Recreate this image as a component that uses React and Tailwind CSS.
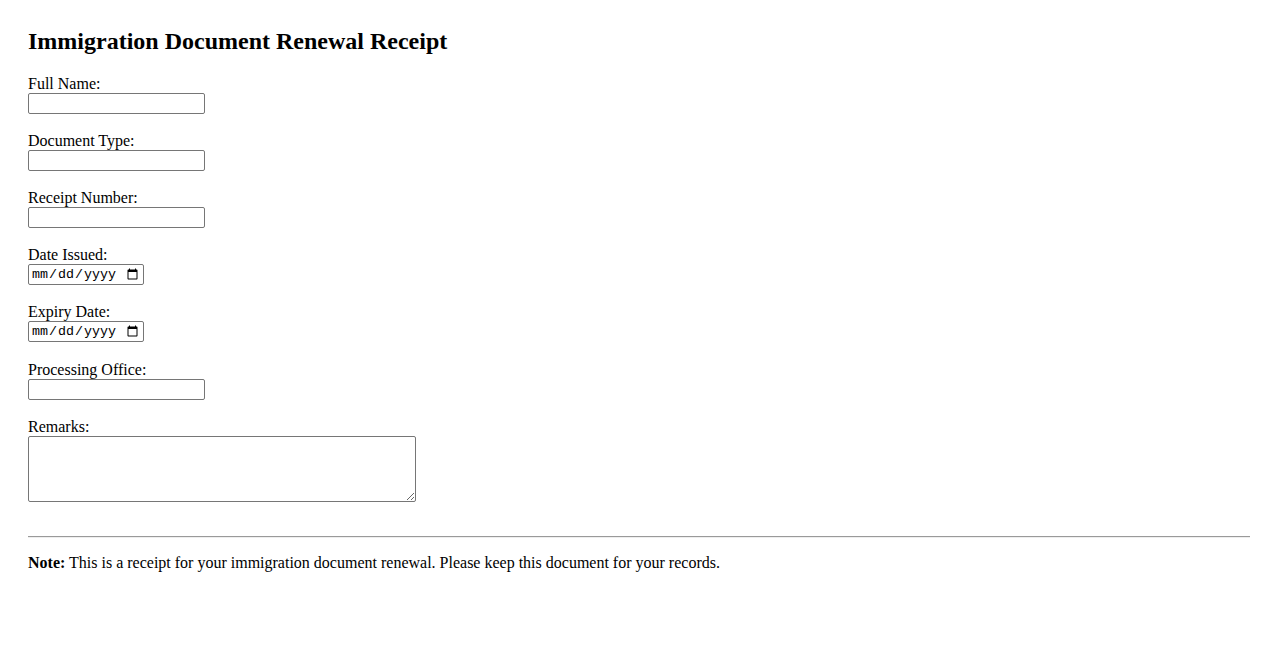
export default function App() {
    const fields = [
        { label: "Full Name:", type: "text" },
        { label: "Document Type:", type: "text" },
        { label: "Receipt Number:", type: "text" },
        { label: "Date Issued:", type: "date" },
        { label: "Expiry Date:", type: "date" },
        { label: "Processing Office:", type: "text" },
    ];

    return (
        <div className="min-h-screen bg-white px-[28px] pt-[28px] text-[16px] text-black font-['Liberation_Serif',serif]">
            <h2 className="text-[24px] font-bold leading-[27.6px] mb-[19px]">Immigration Document Renewal Receipt</h2>

            <form>
                {fields.map((f) => (
                    <div key={f.label} className="mb-[18.2px]">
                        <label className="block leading-[18px]">{f.label}</label>
                        {f.type === "date" ? (
                            <input
                                type="date"
                                className="block w-[116px] h-[21px] border border-[#767676] rounded-[2px] px-[2px] py-0 text-[13.33px] font-['Liberation_Mono',monospace] text-black"
                            />
                        ) : (
                            <input
                                type="text"
                                className="block w-[177px] h-[21px] border border-[#767676] rounded-[2px] px-[2px] py-[1px] text-[13.33px] font-['Liberation_Sans',sans-serif]"
                            />
                        )}
                    </div>
                ))}

                <div>
                    <label className="block leading-[18px]">Remarks:</label>
                    <textarea className="block w-[388px] h-[66px] border border-[#767676] rounded-[2px] px-[2px] py-[2px] text-[13.33px] font-['Liberation_Mono',monospace]"></textarea>
                </div>
            </form>

            <hr className="mt-[34px] border-0 border-t border-t-[#9a9a9a] border-b border-b-[#eeeeee]" />

            <p className="mt-[16px] leading-[18.4px]">
                <strong className="font-bold">Note:</strong> This is a receipt for your immigration document renewal. Please keep this document for your records.
            </p>
        </div>
    );
}
